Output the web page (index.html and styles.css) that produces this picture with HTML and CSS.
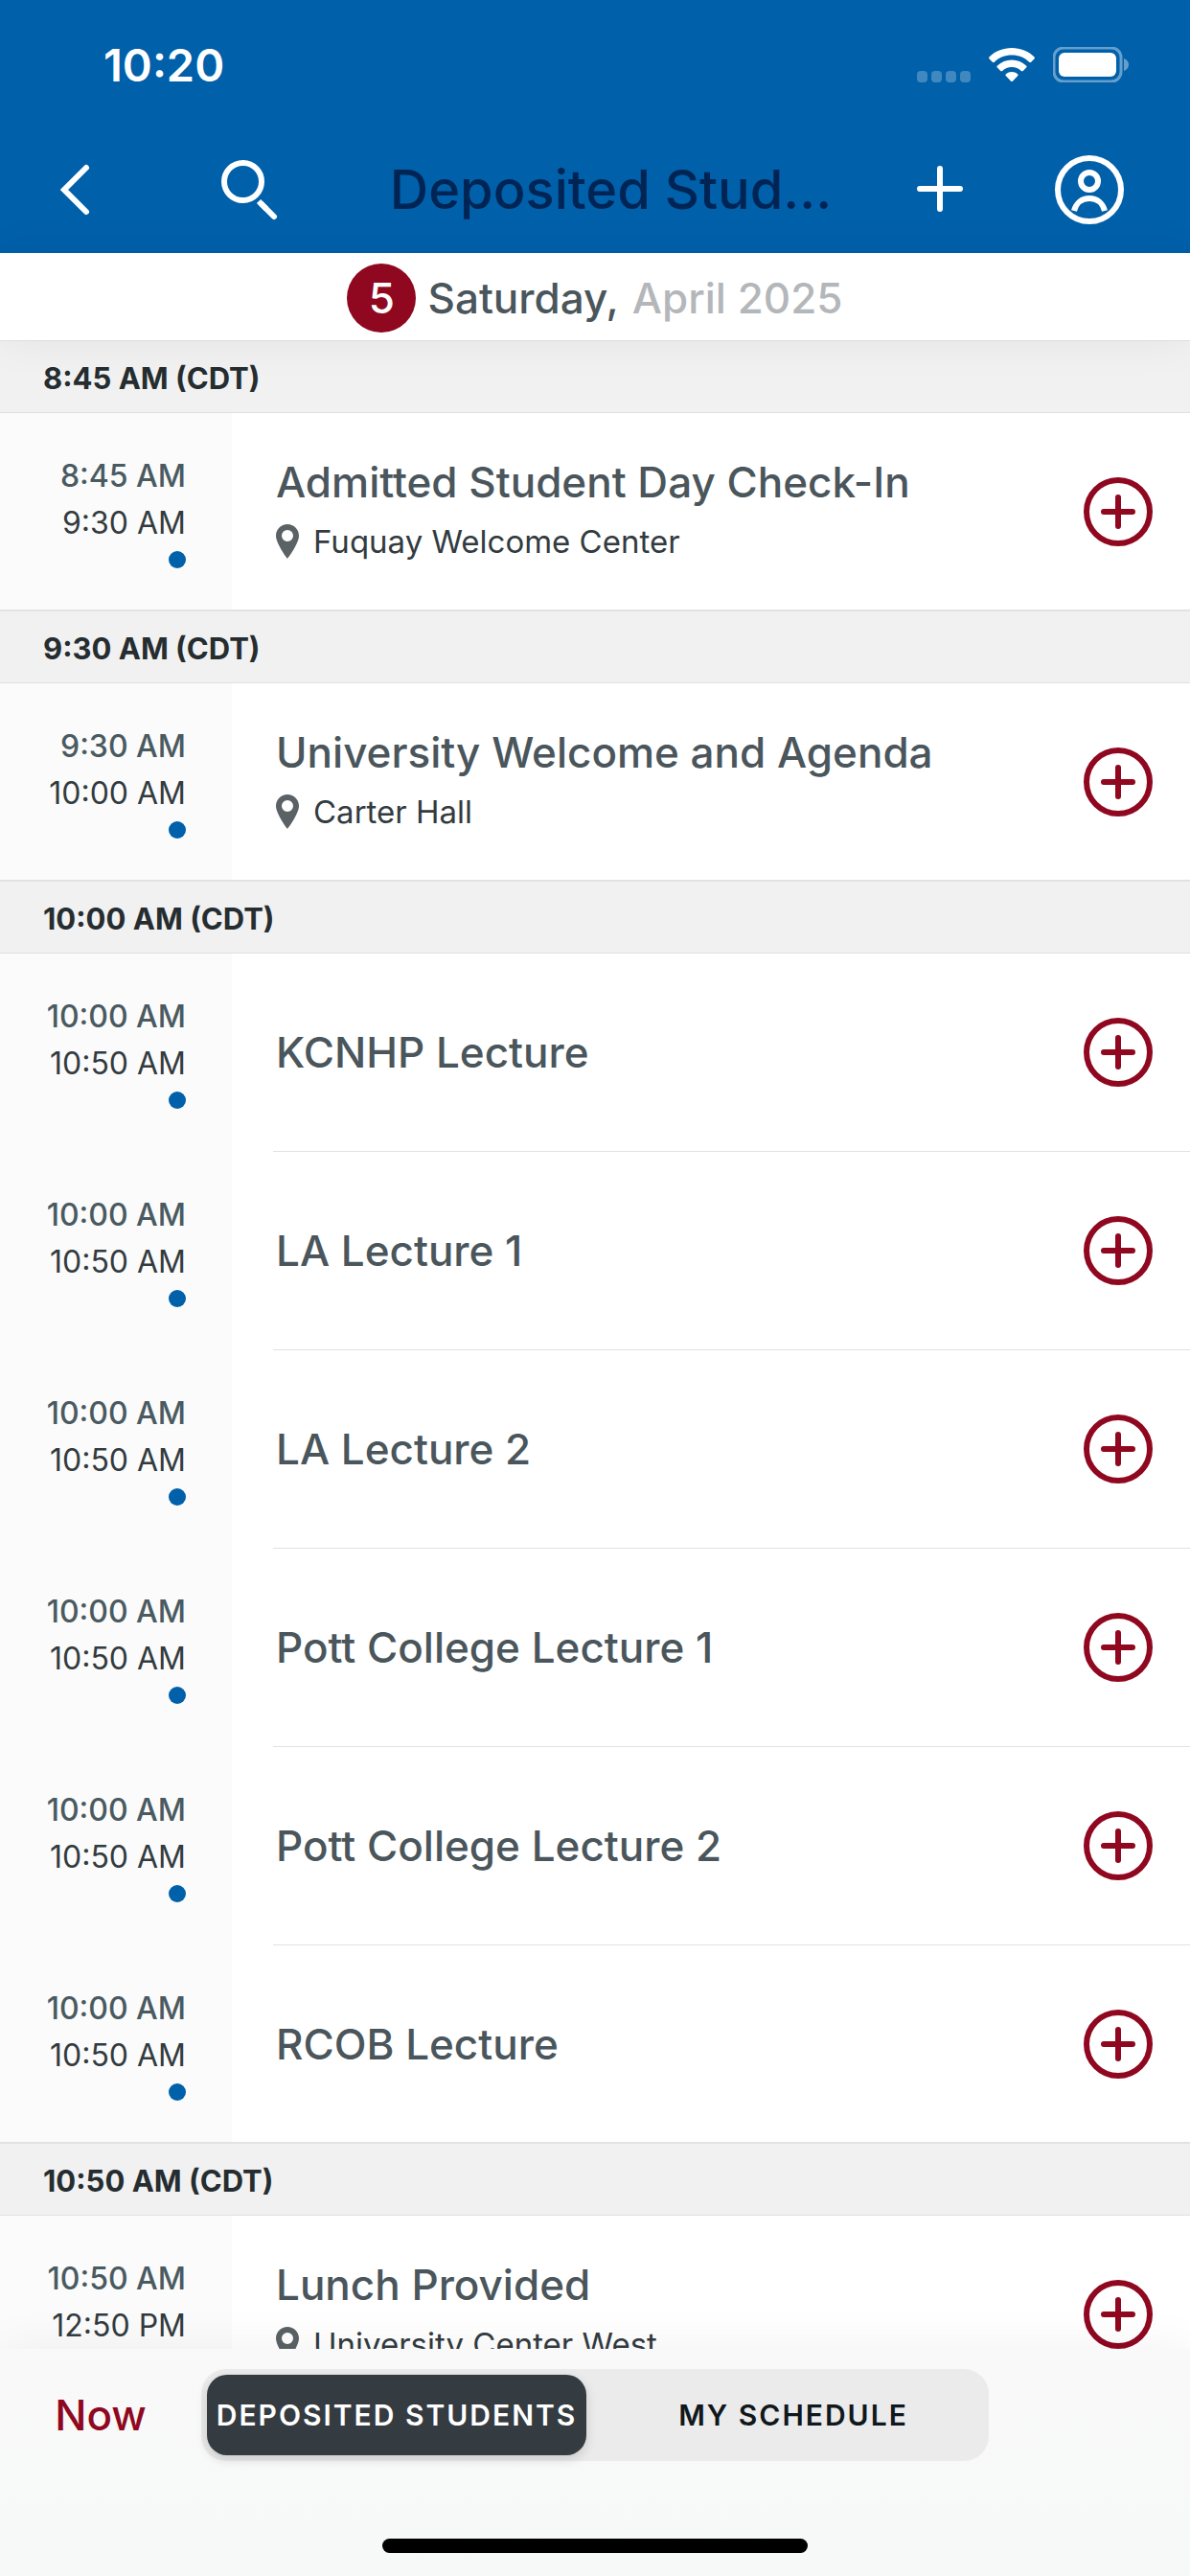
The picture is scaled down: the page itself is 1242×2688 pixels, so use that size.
FILE: index.html
```html
<!DOCTYPE html>
<html lang="en">
<head>
<meta charset="utf-8">
<meta name="viewport" content="width=device-width, initial-scale=1">
<title>Deposited Students</title>
<link rel="stylesheet" href="styles.css">
</head>
<body>
<svg class="defs" aria-hidden="true">
  <symbol id="add" viewBox="0 0 72 72"><circle cx="36" cy="36" r="33"/><path d="M36 21v30M21 36h30"/></symbol>
  <symbol id="pin" viewBox="0 0 24 36"><path fill-rule="evenodd" d="M12 0C5.400 0 0 5.400 0 12c0 8.500 12 24 12 24s12-15.500 12-24C24 5.400 18.600 0 12 0zm0 6a6 6 0 1 1 0 12 6 6 0 0 1 0-12z"/></symbol>
</svg>
<div class="app">
  <header class="top">
    <div class="status">
      <time class="clock">10:20</time>
      <div class="status-icons">
        <svg class="signal" viewBox="0 0 57 12" aria-hidden="true"><rect width="11" height="12" rx="4"/><rect x="15" width="11" height="12" rx="4"/><rect x="30" width="11" height="12" rx="4"/><rect x="45" width="11" height="12" rx="4"/></svg>
        <svg class="wifi" viewBox="0 0 48 36" aria-hidden="true"><path d="M24 0C15 0 6.500 3.500.7 9.200c-.8.800-.8 1.600-.1 2.300l3.200 3.200c.6.600 1.400.6 2.100 0C10.700 10 17 7.500 24 7.500S37.300 10 42.100 14.700c.7.600 1.500.6 2.100 0l3.200-3.200c.7-.7.700-1.500-.1-2.300C41.500 3.500 33 0 24 0z"/><path d="M24 12.500c-5.700 0-11 2.200-15 5.900-.8.700-.8 1.500-.1 2.200l3.300 3.300c.6.600 1.300.6 2 0 2.600-2.400 6-3.800 9.800-3.800s7.200 1.400 9.800 3.800c.7.600 1.400.6 2 0l3.300-3.300c.7-.7.700-1.500-.1-2.200-4-3.700-9.300-5.900-15-5.900z"/><path d="M24 25c-2.300 0-4.400.8-6 2.200-.8.600-.8 1.400-.1 2.100l5 5.200c.7.700 1.500.7 2.200 0l5-5.200c.7-.7.700-1.500-.1-2.100-1.600-1.400-3.700-2.200-6-2.200z"/></svg>
        <svg class="battery" viewBox="0 0 80 37" aria-hidden="true"><rect class="battery-shell" x="1" y="1" width="70" height="35" rx="10"/><rect x="6" y="6" width="60" height="25" rx="6"/><path class="battery-nub" d="M74 12c3 1 5 3.500 5 6.500s-2 5.500-5 6.500z"/></svg>
      </div>
    </div>
    <nav class="nav">
      <button class="icon-button back" aria-label="Back"><svg viewBox="0 0 72 72"><path d="M49 13 26 36l23 23"/></svg></button>
      <button class="icon-button search" aria-label="Search"><svg viewBox="0 0 72 72"><circle cx="29.500" cy="27.500" r="19.500"/><path d="M49 51l13 13"/><path class="butt" d="M46 48l8 8"/></svg></button>
      <h1 class="nav-title">Deposited Stud…</h1>
      <button class="icon-button new" aria-label="Add"><svg viewBox="0 0 72 72"><path d="M36 14v42M15 35h42"/></svg></button>
      <button class="icon-button profile" aria-label="Profile"><svg viewBox="0 0 72 72"><circle cx="36" cy="36" r="33"/><circle cx="36" cy="27" r="9"/><path class="butt" d="M20 58c2-8 8-13 16-13s14 5 16 13"/></svg></button>
    </nav>
  </header>
  <div class="date-bar"><span class="day">5</span><span class="weekday">Saturday,</span><span class="month">April 2025</span></div>

  <main class="schedule">
    <section>
      <h2 class="slot">8:45 AM (CDT)</h2>
      <article class="event">
        <div class="times"><time>8:45 AM</time><time class="end">9:30 AM</time><i class="dot"></i></div>
        <div class="details"><div class="info"><h3>Admitted Student Day Check-In</h3><p><svg><use href="#pin"/></svg>Fuquay Welcome Center</p></div><button class="add" aria-label="Add to my schedule"><svg><use href="#add"/></svg></button></div>
      </article>
    </section>
    <section>
      <h2 class="slot">9:30 AM (CDT)</h2>
      <article class="event">
        <div class="times"><time>9:30 AM</time><time class="end">10:00 AM</time><i class="dot"></i></div>
        <div class="details"><div class="info"><h3>University Welcome and Agenda</h3><p><svg><use href="#pin"/></svg>Carter Hall</p></div><button class="add" aria-label="Add to my schedule"><svg><use href="#add"/></svg></button></div>
      </article>
    </section>
    <section>
      <h2 class="slot">10:00 AM (CDT)</h2>
      <article class="event">
        <div class="times"><time>10:00 AM</time><time class="end">10:50 AM</time><i class="dot"></i></div>
        <div class="details"><div class="info"><h3>KCNHP Lecture</h3></div><button class="add" aria-label="Add to my schedule"><svg><use href="#add"/></svg></button></div>
      </article>
      <article class="event">
        <div class="times"><time>10:00 AM</time><time class="end">10:50 AM</time><i class="dot"></i></div>
        <div class="details"><div class="info"><h3>LA Lecture 1</h3></div><button class="add" aria-label="Add to my schedule"><svg><use href="#add"/></svg></button></div>
      </article>
      <article class="event">
        <div class="times"><time>10:00 AM</time><time class="end">10:50 AM</time><i class="dot"></i></div>
        <div class="details"><div class="info"><h3>LA Lecture 2</h3></div><button class="add" aria-label="Add to my schedule"><svg><use href="#add"/></svg></button></div>
      </article>
      <article class="event">
        <div class="times"><time>10:00 AM</time><time class="end">10:50 AM</time><i class="dot"></i></div>
        <div class="details"><div class="info"><h3>Pott College Lecture 1</h3></div><button class="add" aria-label="Add to my schedule"><svg><use href="#add"/></svg></button></div>
      </article>
      <article class="event">
        <div class="times"><time>10:00 AM</time><time class="end">10:50 AM</time><i class="dot"></i></div>
        <div class="details"><div class="info"><h3>Pott College Lecture 2</h3></div><button class="add" aria-label="Add to my schedule"><svg><use href="#add"/></svg></button></div>
      </article>
      <article class="event">
        <div class="times"><time>10:00 AM</time><time class="end">10:50 AM</time><i class="dot"></i></div>
        <div class="details"><div class="info"><h3>RCOB Lecture</h3></div><button class="add" aria-label="Add to my schedule"><svg><use href="#add"/></svg></button></div>
      </article>
    </section>
    <section>
      <h2 class="slot">10:50 AM (CDT)</h2>
      <article class="event">
        <div class="times"><time>10:50 AM</time><time class="end">12:50 PM</time><i class="dot"></i></div>
        <div class="details"><div class="info"><h3>Lunch Provided</h3><p><svg><use href="#pin"/></svg>University Center West</p></div><button class="add" aria-label="Add to my schedule"><svg><use href="#add"/></svg></button></div>
      </article>
    </section>
  </main>

  <footer class="bottom">
    <div class="toolbar">
      <button class="now">Now</button>
      <div class="segments">
        <button class="segment selected" aria-pressed="true">DEPOSITED STUDENTS</button>
        <button class="segment" aria-pressed="false">MY SCHEDULE</button>
      </div>
    </div>
    <div class="home-indicator"></div>
  </footer>
</div>
</body>
</html>
```
FILE: styles.css
```css
* { box-sizing: border-box; }

body, h1, h2, h3, p { margin: 0; }

body {
  font-family: Inter, "Liberation Sans", sans-serif;
  background: #fff;
  color: #2f373b;
}

button {
  padding: 0;
  border: 0;
  background: none;
  font: inherit;
  color: inherit;
}

svg { display: block; }

.defs { display: none; }

.app {
  display: flex;
  flex-direction: column;
  height: 100vh;
  overflow: hidden;
}

/* Status bar and navigation */
.top {
  flex: none;
  height: 264px;
  background: #0060aa;
  color: #fff;
}

.status {
  display: flex;
  justify-content: space-between;
  height: 132px;
  padding: 38px 63px 0 108px;
}

.clock {
  font-size: 47px;
  line-height: 60px;
  font-weight: 600;
}

.status-icons {
  display: flex;
  align-items: flex-end;
  height: 48px;
  fill: #fff;
}

.signal { width: 57px; height: 12px; margin-right: 18px; opacity: .25; }
.wifi { width: 48px; height: 36px; margin-right: 19px; }
.battery { width: 80px; height: 37px; }
.battery-shell { fill: none; stroke: #fff; stroke-width: 3; opacity: .4; }
.battery-nub { opacity: .4; }

.nav {
  display: flex;
  align-items: center;
  height: 132px;
  padding: 0 69px 0 41px;
}

.icon-button { flex: none; width: 72px; height: 72px; }

.icon-button svg {
  width: 72px;
  height: 72px;
  fill: none;
  stroke: #fff;
  stroke-width: 6;
  stroke-linecap: round;
  overflow: visible;
}

.icon-button .butt { stroke-linecap: butt; }

.search { margin-left: 111px; }
.profile { margin-left: 84px; }

.nav-title {
  flex: 1;
  padding-left: 34px;
  color: #002555;
  font-size: 56px;
  line-height: 72px;
  font-weight: 500;
  text-align: center;
  white-space: nowrap;
}

/* Date strip */
.date-bar {
  position: relative;
  z-index: 1;
  flex: none;
  display: flex;
  align-items: center;
  justify-content: center;
  height: 92px;
  padding-top: 2px;
  border-bottom: 1px solid #dedede;
  background: #fff;
  box-shadow: 0 0 48px rgba(0, 0, 0, .06);
  color: #4a565c;
  font-size: 44px;
  font-weight: 500;
}

.day {
  width: 72px;
  margin-right: 12px;
  border-radius: 50%;
  background: #8f0820;
  color: #fff;
  line-height: 72px;
  text-align: center;
}

.month { margin-left: 14px; color: #b4b7ba; }

/* Event list */
.schedule { flex: 1; min-height: 0; overflow: hidden; }

.slot {
  height: 77px;
  padding: 3px 45px 0;
  border-top: 2px solid #e2e2e2;
  border-bottom: 1px solid #e0e0e0;
  background: #f1f1f1;
  color: #262d30;
  font-size: 31px;
  line-height: 72px;
  font-weight: 700;
}

section:first-child .slot { height: 75px; border-top: 0; }

.event { display: flex; height: 207px; }
.event:last-child { height: 205px; }

.times {
  flex: none;
  display: flex;
  flex-direction: column;
  align-items: flex-end;
  width: 242px;
  padding: 41px 48px 0 0;
  background: #fbfbfb;
  color: #4a5a61;
  font-size: 32px;
  line-height: 49px;
  font-weight: 500;
}

.times .end { color: #333b3f; font-weight: 400; }

.dot {
  width: 18px;
  height: 18px;
  margin-top: 5px;
  border-radius: 50%;
  background: #0060aa;
}

.details {
  flex: 1;
  display: flex;
  align-items: center;
  margin-left: 43px;
  padding: 0 39px 0 3px;
  border-bottom: 1px solid #e2e2e2;
}

.event:last-child .details { border-bottom: 0; }

.info { flex: 1; }

.info h3 {
  color: #4a565c;
  font-size: 44px;
  line-height: 62px;
  font-weight: 500;
}

.info p {
  display: flex;
  align-items: center;
  gap: 15px;
  color: #333b3f;
  font-size: 33px;
  line-height: 62px;
}

.info svg { width: 24px; height: 36px; fill: #5b6265; }

.add svg {
  width: 72px;
  height: 72px;
  fill: none;
  stroke: #8f0820;
  stroke-width: 6;
  stroke-linecap: round;
}

/* Bottom toolbar */
.bottom {
  position: relative;
  z-index: 1;
  flex: none;
  height: 237px;
  padding-top: 21px;
  background: linear-gradient(#f9f9f9, #f7f8f8);
  box-shadow: 0 0 48px rgba(0, 0, 0, .06);
}

.toolbar { display: flex; align-items: center; }

.now {
  width: 210px;
  color: #8f0820;
  font-size: 44px;
  font-weight: 500;
}

.segments {
  flex: none;
  display: grid;
  grid-template-columns: 1fr 1fr;
  gap: 18px;
  width: 822px;
  padding: 6px;
  border-radius: 26px;
  background: #ebebeb;
}

.segment {
  height: 84px;
  border-radius: 21px;
  color: #10181c;
  font-size: 30px;
  font-weight: 600;
  letter-spacing: 2px;
  white-space: nowrap;
}

.segment.selected {
  background: #343b41;
  box-shadow: 0 4px 12px rgba(0, 0, 0, .15);
  color: #fff;
}

.home-indicator {
  width: 444px;
  height: 15px;
  margin: 81px auto 0;
  border-radius: 8px;
  background: #000;
}
```
